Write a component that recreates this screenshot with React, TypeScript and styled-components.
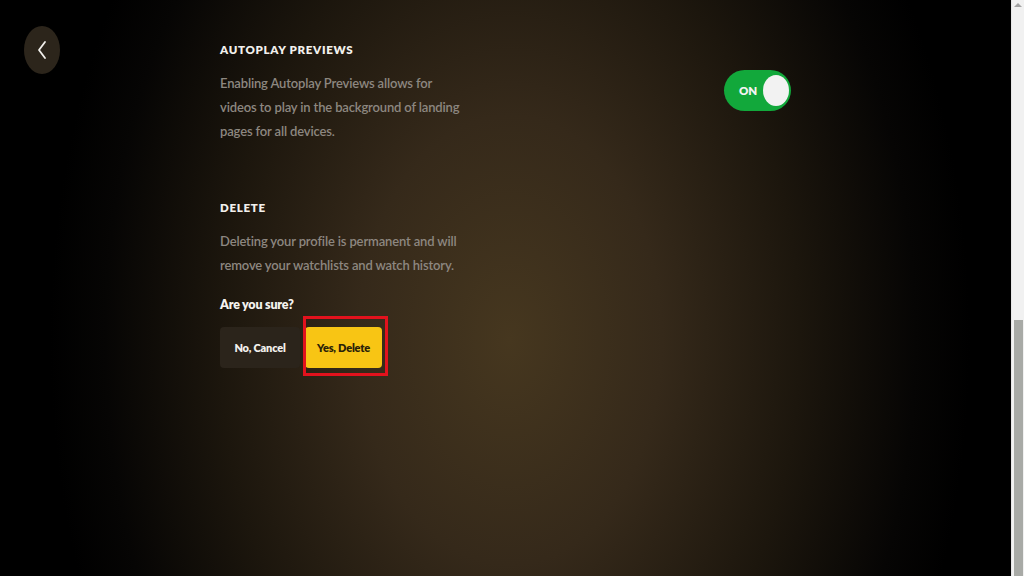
import styled, { createGlobalStyle } from "styled-components";

const GlobalStyle = createGlobalStyle`
  html, body {
    margin: 0;
    padding: 0;
    height: 100%;
    background: #000;
    overflow: hidden;
  }
  #root {
    height: 100%;
  }
  * {
    box-sizing: border-box;
  }
`;

const Page = styled.div`
  display: flex;
  width: 100%;
  height: 100vh;
  font-family: Lato, "Open Sans", sans-serif;
`;

const Main = styled.main`
  flex: 1;
  display: flex;
  background: radial-gradient(
    ellipse 460px 680px at 510px 340px,
    #46371f 0%,
    #35291a 33%,
    #1c160d 63%,
    #060504 88%,
    #000 100%
  );
`;

const Side = styled.div`
  width: 220px;
  padding: 26px 0 0 24px;
`;

const BackButton = styled.button`
  width: 36px;
  height: 48px;
  border-radius: 50%;
  border: none;
  background: #2c251b;
  display: flex;
  align-items: center;
  justify-content: center;
  padding: 0;
  cursor: pointer;
`;

const Content = styled.div`
  width: 571px;
  padding-top: 40px;
`;

const Section = styled.section`
  display: flex;
  justify-content: space-between;
  align-items: flex-start;
  margin-bottom: 55px;
`;

const Block = styled.div`
  width: 245px;
`;

const Title = styled.h2`
  margin: 0;
  font-size: 11.5px;
  line-height: 20px;
  font-weight: 800;
  letter-spacing: 0.7px;
  color: #f2f0ec;
  text-transform: uppercase;
`;

const Text = styled.p`
  margin: 11px 0 0;
  font-size: 13px;
  line-height: 24px;
  font-weight: 600;
  letter-spacing: -0.15px;
  color: #8d8780;
`;

const Toggle = styled.div<{ $on: boolean }>`
  margin-top: 30px;
  width: 67px;
  height: 41px;
  border-radius: 21px;
  background: ${(p) => (p.$on ? "#12a83b" : "#555")};
  display: flex;
  align-items: center;
  justify-content: space-between;
  padding: 0 2px 0 15px;
`;

const ToggleLabel = styled.span`
  color: #f4f4f4;
  font-size: 11.5px;
  font-weight: 800;
`;

const Knob = styled.span`
  width: 26px;
  height: 31px;
  border-radius: 50%;
  background: #f2f2f2;
`;

const Question = styled.div`
  margin-top: 18px;
  font-size: 12.5px;
  line-height: 20px;
  font-weight: 800;
  letter-spacing: -0.2px;
  color: #f5f3ef;
`;

const Actions = styled.div`
  display: flex;
  gap: 5px;
  margin-top: 12px;
`;

const ActionButton = styled.button<{ $primary?: boolean }>`
  height: 41px;
  padding: 0 12px;
  border: none;
  border-radius: 4px;
  font-family: inherit;
  font-size: 11px;
  font-weight: 800;
  letter-spacing: -0.2px;
  cursor: pointer;
  background: ${(p) => (p.$primary ? "#f8c514" : "#2b241b")};
  color: ${(p) => (p.$primary ? "#2a2208" : "#f2f0ec")};
`;

const CancelButton = styled(ActionButton)`
  width: 80px;
`;

const DeleteButton = styled(ActionButton)`
  width: 77px;
`;

const Highlight = styled.div`
  position: relative;
`;

const HighlightFrame = styled.span`
  position: absolute;
  left: -2px;
  right: -6px;
  top: -11px;
  bottom: -8px;
  border: 3px solid #e2121d;
  pointer-events: none;
`;

const Scrollbar = styled.div`
  width: 13px;
  background: #f1f1f1;
  display: flex;
  flex-direction: column;
  align-items: center;
  border-left: 1px solid #e6e6e6;
`;

const ScrollArrow = styled.span`
  margin-top: 3px;
  width: 0;
  height: 0;
  border-left: 4px solid transparent;
  border-right: 4px solid transparent;
  border-bottom: 4px solid #a3a3a3;
`;

const ScrollThumb = styled.span`
  margin-top: auto;
  width: 9px;
  height: 256px;
  background: #a8aaa6;
`;

export default function App() {
  return (
    <Page>
      <GlobalStyle />
      <Main>
        <Side>
          <BackButton aria-label="Back">
            <svg width="12" height="20" viewBox="0 0 12 20" fill="none">
              <path
                d="M9 2 L3 10 L9 18"
                stroke="#f2f0ec"
                strokeWidth="1.8"
                strokeLinecap="round"
                strokeLinejoin="round"
              />
            </svg>
          </BackButton>
        </Side>
        <Content>
          <Section>
            <Block>
              <Title>Autoplay Previews</Title>
              <Text>
                Enabling Autoplay Previews allows for videos to play in the
                background of landing pages for all devices.
              </Text>
            </Block>
            <Toggle $on>
              <ToggleLabel>ON</ToggleLabel>
              <Knob />
            </Toggle>
          </Section>
          <Block>
            <Title>Delete</Title>
            <Text>
              Deleting your profile is permanent and will remove your
              watchlists and watch history.
            </Text>
            <Question>Are you sure?</Question>
            <Actions>
              <CancelButton>No, Cancel</CancelButton>
              <Highlight>
                <DeleteButton $primary>Yes, Delete</DeleteButton>
                <HighlightFrame />
              </Highlight>
            </Actions>
          </Block>
        </Content>
      </Main>
      <Scrollbar>
        <ScrollArrow />
        <ScrollThumb />
      </Scrollbar>
    </Page>
  );
}
